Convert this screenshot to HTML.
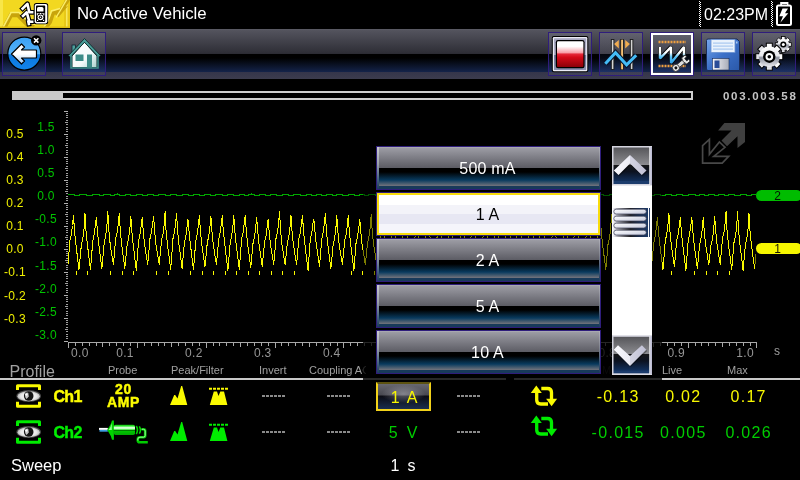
<!DOCTYPE html>
<html>
<head>
<meta charset="utf-8">
<title>Scope</title>
<style>
*{margin:0;padding:0;box-sizing:border-box}
html,body{width:800px;height:480px;background:#000;overflow:hidden}
body{font-family:"Liberation Sans",sans-serif;color:#fff;position:relative}
#root{position:absolute;left:0;top:0;width:800px;height:480px;will-change:transform;overflow:hidden}
.abs{position:absolute}
#ybox{left:0;top:0;width:70px;height:28px;background:#f2d81e;overflow:hidden}
#title{left:77px;top:4px;font-size:16.8px;line-height:20px;white-space:nowrap}
#clock{left:704px;top:5px;font-size:16px;line-height:20px;white-space:nowrap}
#toolbar{left:0;top:29px;width:800px;height:50px;
 background:linear-gradient(to bottom,#5e5e68 0px,#54545e 1px,#2e2e36 24px,#2c2c34 24.5px,#000 25px,#000 29px,#14234a 43px,#34354a 43px,#3c3c4e 50px)}
.tb{position:absolute;top:3px;width:44px;height:44px;border:1px solid #2f1d7c;background:linear-gradient(to bottom,rgba(190,190,215,0.17) 0,rgba(190,190,215,0.15) 21px,rgba(60,100,200,0.07) 21px,rgba(60,100,200,0.22) 39px,rgba(150,150,190,0.1) 39px)}
.tb.sel{border:1px solid #2f1d7c;box-shadow:inset 0 0 0 2px #fff}
.tb svg{position:absolute;left:-1px;top:-1px}
#pbar{left:12px;top:91px;width:681px;height:9px;border:2px solid #cfcfcf;background:#000}
#pfill{left:12px;top:91px;width:51px;height:9px;background:#cacaca}
#ptext{left:723px;top:89px;font-size:11.5px;font-weight:bold;color:#c4c4c4;letter-spacing:1.7px;line-height:14px;white-space:nowrap}
.yl{position:absolute;font-size:12px;line-height:14px;width:40px;text-align:center;white-space:nowrap;letter-spacing:0.3px}
.yl.y{left:-5px;color:#f0f000}
.yl.g{left:26px;color:#00c400}
.xl{position:absolute;top:346px;width:30px;text-align:center;letter-spacing:0.3px;font-size:12px;line-height:14px;color:#969696}
.hd{position:absolute;top:364px;font-size:11px;line-height:13px;color:#a0a0a0;white-space:nowrap}
.val{position:absolute;font-size:16px;line-height:20px;white-space:nowrap;letter-spacing:1.3px}
.col{width:80px;text-align:center;padding-left:1.3px}
.yc{color:#f8f800}.gc{color:#00cc00}
.bd.yc{color:#fcfc00;-webkit-text-stroke:0.45px #fcfc00}.bd.gc{color:#00ee00;-webkit-text-stroke:0.45px #00ee00}
.dash{position:absolute;width:24px;height:2px;background:repeating-linear-gradient(to right,#8a8a8a 0,#8a8a8a 3px,#000 3px,#000 4px)}
.item{position:absolute;left:376px;width:225px;height:44px;border:1px solid #2f1d7c;color:#fff;font-size:16px;letter-spacing:0.2px;text-align:center;line-height:44px;padding-right:2px;
 background:linear-gradient(to bottom,#c8c8d0 0,#9aa0ac 40%,#4a6484 75%,#1c3c5c 100%) left top/2px 100% no-repeat,linear-gradient(to bottom,#b0b0b8 0,#80848e 40%,#3a5474 75%,#1c3c5c 100%) right top/1px 100% no-repeat,linear-gradient(to bottom,#b4b4bc 0,#9c9ca4 1px,#5c5c64 21px,#000 21.5px,#000 25px,#083a5e 33px,#74747c 39px,#183a5a 39.3px,#183a5a 42px)}
.item.sel{border:1px solid #2f1d7c;box-shadow:inset 0 0 0 2px #f8dc0c;color:#000;height:44px;line-height:44px;
 background:linear-gradient(to bottom,#fff 0,#fff 11.5px,#f3f3f9 11.5px,#f3f3f9 21px,#e7e7f3 21px,#e7e7f3 31px,#f5f5fb 31px,#f5f5fb 42px)}
</style>
</head>
<body>
<div id="root">
<!-- title bar -->
<div id="ybox" class="abs">
<svg width="70" height="28" viewBox="0 0 70 28">
 <rect width="70" height="28" fill="#f2d820"/>
 <rect x="0" y="0" width="3" height="28" fill="#f8e648"/>
 <rect x="64" y="0" width="6" height="28" fill="#e8c818"/><rect x="66" y="0" width="1.500" height="28" fill="#f8e860"/>
 <g fill="none" stroke-linejoin="miter">
 <polyline points="3,30 11,15 18,15 27,24 34,27" stroke="#c8a40c" stroke-width="4.500"/>
 <polyline points="3,27.500 11,12.500 19,12.500 28,21.500 35,24.500" stroke="#fbee6a" stroke-width="1.600"/>
 <polyline points="44,30 50,22 53,13 62,10 57,16 62,9 69,-2" stroke="#c8a40c" stroke-width="4"/>
 <polyline points="42,30 48,21 51.500,11 60,8.500" stroke="#fbee6a" stroke-width="1.600"/>
 <polyline points="56,17.500 60,11 67,-1" stroke="#fbee6a" stroke-width="1.400"/>
 </g>
 <rect x="0" y="26.500" width="70" height="1.500" fill="#dcbc14"/>
 <!-- zigzag arrows -->
 <g fill="none" stroke-linejoin="round" stroke-linecap="butt">
  <g stroke="#000" stroke-width="4.800" stroke-linecap="square">
   <path d="M22.600 8.600 L27.400 3.800 L29.300 12.300 L32.200 12.300"/>
   <path d="M23 15.900 L26.800 12.300 L29.300 21.700 L32.200 21.700"/>
   <path d="M28.300 21.500 L28.800 24"/>
  </g>
  <g stroke="#fff" stroke-width="2.600" stroke-linecap="square">
   <path d="M22.600 8.600 L27.400 3.800 L29.300 12.300 L32.200 12.300"/>
   <path d="M23 15.900 L26.800 12.300 L29.300 21.700 L32.200 21.700"/>
   <path d="M28.300 21.500 L28.800 24"/>
  </g>
 </g>
 <!-- scanner -->
 <rect x="33.800" y="3" width="14.400" height="21.300" rx="2.500" fill="#000"/>
 <rect x="34.700" y="3.900" width="12.600" height="19.500" rx="1.800" fill="#fff"/>
 <rect x="36" y="5.600" width="9.200" height="16.300" rx="0.800" fill="#000"/>
 <path d="M37 11.500 L37 8.500 Q37 7 38.500 7 L42 7 Q43.500 7 43.500 8.500 L43.500 11.500 Z" fill="#fff"/>
 <circle cx="40.500" cy="17.300" r="2.900" fill="#fff"/>
 <circle cx="40.500" cy="17.300" r="1.700" fill="#000"/>
 <circle cx="40.500" cy="17.300" r="0.800" fill="#fff"/>
 <rect x="38.400" y="13" width="1" height="1" fill="#fff"/><rect x="40" y="13" width="1" height="1" fill="#fff"/><rect x="41.600" y="13" width="1" height="1" fill="#fff"/>
 <rect x="36.800" y="13" width="1" height="2.500" fill="#fff"/><rect x="43.300" y="13" width="1" height="2.500" fill="#fff"/>
 <rect x="37" y="19.800" width="1.200" height="1.200" fill="#fff"/><rect x="43" y="19.800" width="1.200" height="1.200" fill="#fff"/>
</svg>
</div>
<div id="title" class="abs">No Active Vehicle</div>
<svg class="abs" style="left:696px;top:0" width="104" height="29" viewBox="0 0 104 29">
 <line x1="3.500" y1="1" x2="3.500" y2="27" stroke="#fff" stroke-width="1" stroke-dasharray="1 1"/>
 <line x1="4.500" y1="2" x2="4.500" y2="27" stroke="#fff" stroke-width="1" stroke-dasharray="1 1"/>
 <line x1="75.500" y1="1" x2="75.500" y2="27" stroke="#fff" stroke-width="1" stroke-dasharray="1 1"/>
 <line x1="76.500" y1="2" x2="76.500" y2="27" stroke="#fff" stroke-width="1" stroke-dasharray="1 1"/>
 <!-- battery -->
 <rect x="85.200" y="3" width="6.200" height="3" fill="none" stroke="#fff" stroke-width="2"/>
 <rect x="81" y="5.500" width="14" height="19.500" rx="1.500" fill="#000" stroke="#fff" stroke-width="2"/>
 <path d="M92 8.500 L86.500 8.500 L83.300 16.200 L87 16.200 L84.300 22.800 L92.300 13.300 L89 13.300 Z" fill="#fff"/>
</svg>
<div id="clock" class="abs">02:23PM</div>

<!-- toolbar -->
<div id="toolbar" class="abs">
 <div class="tb" style="left:2px">
  <svg width="44" height="44" viewBox="0 0 44 44">
   <defs><linearGradient id="gb" x1="0" y1="0" x2="0" y2="1"><stop offset="0" stop-color="#3aa0f4"/><stop offset="0.52" stop-color="#58b4f8"/><stop offset="0.53" stop-color="#0a78e0"/><stop offset="1" stop-color="#1484ea"/></linearGradient>
   <linearGradient id="ga" x1="0" y1="0" x2="0" y2="1"><stop offset="0" stop-color="#fff"/><stop offset="0.5" stop-color="#fff"/><stop offset="1" stop-color="#9cc8f4"/></linearGradient></defs>
   <circle cx="22.300" cy="21.600" r="16.500" fill="url(#gb)" stroke="#000" stroke-width="1.200"/>
   <path d="M9.500 22 L19.500 12 L22.500 15 L19.500 18 L34 18 L34.500 18.500 L34.500 25.500 L34 26 L19.500 26 L22.500 29 L19.500 32 Z" fill="url(#ga)" stroke="#000" stroke-width="1.200" stroke-linejoin="round"/>
   <circle cx="34.200" cy="8.400" r="5.200" fill="#000"/>
   <path d="M32 6.200 L36.400 10.600 M36.400 6.200 L32 10.600" stroke="#fff" stroke-width="1.500"/>
  </svg>
 </div>
 <div class="tb" style="left:62px">
  <svg width="44" height="44" viewBox="0 0 44 44">
   <defs><linearGradient id="gh" x1="0" y1="0" x2="1" y2="1"><stop offset="0" stop-color="#fff"/><stop offset="0.6" stop-color="#f4fafa"/><stop offset="1" stop-color="#a8d0cc"/></linearGradient></defs>
   <rect x="10" y="13" width="3.400" height="8" fill="#4ea09c" stroke="#123" stroke-width="0.800"/>
   <path d="M10 24 L22.500 10 L35 24 L35 35.500 L10 35.500 Z" fill="url(#gh)" stroke="#0c2a2a" stroke-width="1"/>
   <path d="M6.500 23.500 L22.500 6.500 L38.500 23.500 L36.500 25.200 L22.500 10.300 L8.500 25.200 Z" fill="#4a9c98" stroke="#0c2a2a" stroke-width="0.900" stroke-linejoin="round"/>
   <path d="M9 22.500 L9 36 L36 36 L36 22.500" fill="none" stroke="#3e8e8a" stroke-width="1.600"/>
   <rect x="13.500" y="22.500" width="8" height="6.500" fill="#3c8c88"/>
   <rect x="25" y="22.500" width="5" height="13" fill="#3c8c88"/>
  </svg>
 </div>
 <div class="tb" style="left:548px">
  <svg width="44" height="44" viewBox="0 0 44 44">
   <defs><linearGradient id="gr" x1="0" y1="0" x2="0" y2="1"><stop offset="0" stop-color="#fff"/><stop offset="0.2" stop-color="#fff"/><stop offset="0.44" stop-color="#f8a0a8"/><stop offset="0.5" stop-color="#e42838"/><stop offset="0.62" stop-color="#d40a18"/><stop offset="1" stop-color="#8a0008"/></linearGradient>
   <linearGradient id="gf" x1="0" y1="0" x2="0" y2="1"><stop offset="0" stop-color="#a4a4bc"/><stop offset="0.52" stop-color="#b4b4cc"/><stop offset="0.54" stop-color="#70749a"/><stop offset="1" stop-color="#8c90b0"/></linearGradient></defs>
   <rect x="3.800" y="4" width="36.500" height="36.200" rx="2" fill="#000"/>
   <rect x="4.800" y="5" width="34.500" height="34.200" rx="1.200" fill="#ececf6"/>
   <rect x="6" y="6.200" width="32.200" height="31.800" rx="0.500" fill="url(#gf)"/>
   <rect x="7.800" y="8" width="28.800" height="28.300" rx="2.200" fill="#000"/>
   <rect x="9" y="9.200" width="26.400" height="25.900" rx="1.200" fill="url(#gr)"/>
  </svg>
 </div>
 <div class="tb" style="left:599px">
  <svg width="44" height="44" viewBox="0 0 44 44">
   <rect x="12.300" y="7.500" width="2.600" height="30" fill="#d4d4d4" stroke="#1a1a1a" stroke-width="0.900"/>
   <rect x="31.300" y="7.500" width="2.600" height="30" fill="#d4d4d4" stroke="#1a1a1a" stroke-width="0.900"/>
   <rect x="21.700" y="7.500" width="2.800" height="30" fill="#e8a040" stroke="#1a1a1a" stroke-width="0.900"/>
   <rect x="22.600" y="7.500" width="1" height="30" fill="#f8d8a0"/>
   <path d="M15.100 12 L19.800 8 L19.800 16.500 Z" fill="#f0ac50"/>
   <path d="M30.900 12 L26.200 8 L26.200 16.500 Z" fill="#f0ac50"/>
   <polyline points="6.300,31.800 16.500,20.800 27.600,32.800 37.200,23.200" fill="none" stroke="#08142a" stroke-width="5" stroke-linejoin="miter"/>
   <polyline points="6.300,31.800 16.500,20.800 27.600,32.800 37.200,23.200" fill="none" stroke="#44bcf6" stroke-width="3" stroke-linejoin="miter"/>
  </svg>
 </div>
 <div class="tb sel" style="left:650px">
  <svg width="44" height="44" viewBox="0 0 44 44">
   <defs><linearGradient id="gs" x1="0" y1="0" x2="0" y2="1"><stop offset="0" stop-color="#fff"/><stop offset="0.35" stop-color="#fff"/><stop offset="0.62" stop-color="#58c0f4"/><stop offset="1" stop-color="#2aa0e8"/></linearGradient></defs>
   <line x1="8.500" y1="10" x2="36" y2="10" stroke="#f0a040" stroke-width="2.400" stroke-dasharray="2 1"/>
   <line x1="8.500" y1="34" x2="36" y2="34" stroke="#f0a040" stroke-width="2.400" stroke-dasharray="2 1"/>
   <polyline points="10,15 10,26.500 21,15 21,31 34,15 34,23.500" fill="none" stroke="#000" stroke-width="4" stroke-linejoin="bevel"/>
   <polyline points="10,15 10,26.500 21,15 21,31 34,15 34,23.500" fill="none" stroke="url(#gs)" stroke-width="2.500" stroke-linejoin="bevel"/>
   <g transform="translate(31.500 31.200) rotate(-40)">
    <rect x="-7" y="-1.900" width="12" height="3.800" fill="#dcdcdc" stroke="#2a2a2a" stroke-width="0.800"/>
    <circle cx="-7.300" cy="0" r="3.500" fill="#e8e8e8" stroke="#2a2a2a" stroke-width="0.800"/>
    <circle cx="-7.300" cy="0" r="1.500" fill="#111"/>
    <path d="M3.500 -4 L8 -4 L8 -1.600 L5.500 -1.600 L5.500 1.600 L8 1.600 L8 4 L3.500 4 Q1 0 3.500 -4 Z" fill="#e8e8e8" stroke="#2a2a2a" stroke-width="0.800"/>
   </g>
  </svg>
 </div>
 <div class="tb" style="left:701px">
  <svg width="44" height="44" viewBox="0 0 44 44">
   <defs><linearGradient id="gd" x1="0" y1="0" x2="1" y2="1"><stop offset="0" stop-color="#78a8ec"/><stop offset="0.5" stop-color="#3c70c8"/><stop offset="1" stop-color="#2a58a8"/></linearGradient>
   <linearGradient id="gm" x1="0" y1="0" x2="1" y2="0"><stop offset="0" stop-color="#f4f4f8"/><stop offset="1" stop-color="#a8acb8"/></linearGradient></defs>
   <path d="M7 7 L36 7 L38.500 9.500 L38.500 38.500 L7 38.500 Q5.500 38.500 5.500 37 L5.500 8.500 Q5.500 7 7 7 Z" fill="url(#gd)" stroke="#1a2c58" stroke-width="1"/>
   <rect x="10" y="7.500" width="24" height="13" fill="#eaf2fc" stroke="#6890d0" stroke-width="0.800"/>
   <rect x="12" y="10.500" width="20" height="1.200" fill="#a8c8f0"/><rect x="12" y="13.500" width="20" height="1.200" fill="#a8c8f0"/><rect x="12" y="16.500" width="20" height="1.200" fill="#a8c8f0"/>
   <rect x="11.500" y="26.500" width="16.500" height="11.500" fill="url(#gm)" stroke="#1a2c58" stroke-width="0.600"/>
   <rect x="13.500" y="28.500" width="5" height="7.500" fill="#2a4c98"/>
   <rect x="35" y="9.500" width="1.500" height="2" fill="#a8c8f0"/>
  </svg>
 </div>
 <div class="tb" style="left:752px">
  <svg width="44" height="44" viewBox="0 0 44 44">
   <defs><linearGradient id="gg" x1="0" y1="0" x2="0" y2="1"><stop offset="0" stop-color="#fff"/><stop offset="0.45" stop-color="#e8e8ec"/><stop offset="0.55" stop-color="#8c909c"/><stop offset="1" stop-color="#f0f0f4"/></linearGradient></defs>
   <g transform="translate(31.300 12.500)">
    <g fill="url(#gg)" stroke="#000" stroke-width="0.800">
     <rect x="-1.800" y="-8" width="3.600" height="16" /><rect x="-1.800" y="-8" width="3.600" height="16" transform="rotate(45)"/><rect x="-1.800" y="-8" width="3.600" height="16" transform="rotate(90)"/><rect x="-1.800" y="-8" width="3.600" height="16" transform="rotate(135)"/>
    </g>
    <circle r="5.800" fill="url(#gg)"/><circle r="3" fill="#000"/><circle r="1.500" fill="#fff"/>
   </g>
   <g transform="translate(17.300 24.700)">
    <g fill="url(#gg)" stroke="#000" stroke-width="1">
     <rect x="-3" y="-13.500" width="6" height="27"/><rect x="-3" y="-13.500" width="6" height="27" transform="rotate(45)"/><rect x="-3" y="-13.500" width="6" height="27" transform="rotate(90)"/><rect x="-3" y="-13.500" width="6" height="27" transform="rotate(135)"/>
    </g>
    <circle r="10.500" fill="url(#gg)"/><circle r="6.200" fill="#000"/><circle r="3.800" fill="#fff"/><circle r="1.800" fill="#000"/>
   </g>
  </svg>
 </div>
</div>

<!-- progress -->
<div id="pbar" class="abs"></div><div id="pfill" class="abs"></div>
<div id="ptext" class="abs">003.003.58</div>

<!-- graph -->
<svg class="abs" style="left:0;top:0" width="800" height="480" viewBox="0 0 800 480" shape-rendering="crispEdges">
 <rect x="64" y="111" width="4" height="1" fill="#b0b0b0"/><rect x="66" y="113" width="2" height="1" fill="#a0a0a0"/><rect x="66" y="115" width="2" height="1" fill="#a0a0a0"/><rect x="66" y="117" width="2" height="1" fill="#a0a0a0"/><rect x="66" y="120" width="2" height="1" fill="#a0a0a0"/><rect x="65" y="122" width="3" height="1" fill="#a0a0a0"/><rect x="66" y="124" width="2" height="1" fill="#a0a0a0"/><rect x="66" y="127" width="2" height="1" fill="#a0a0a0"/><rect x="66" y="129" width="2" height="1" fill="#a0a0a0"/><rect x="66" y="131" width="2" height="1" fill="#a0a0a0"/><rect x="64" y="134" width="4" height="1" fill="#b0b0b0"/><rect x="66" y="136" width="2" height="1" fill="#a0a0a0"/><rect x="66" y="138" width="2" height="1" fill="#a0a0a0"/><rect x="66" y="140" width="2" height="1" fill="#a0a0a0"/><rect x="66" y="143" width="2" height="1" fill="#a0a0a0"/><rect x="65" y="145" width="3" height="1" fill="#a0a0a0"/><rect x="66" y="147" width="2" height="1" fill="#a0a0a0"/><rect x="66" y="150" width="2" height="1" fill="#a0a0a0"/><rect x="66" y="152" width="2" height="1" fill="#a0a0a0"/><rect x="66" y="154" width="2" height="1" fill="#a0a0a0"/><rect x="64" y="157" width="4" height="1" fill="#b0b0b0"/><rect x="66" y="159" width="2" height="1" fill="#a0a0a0"/><rect x="66" y="161" width="2" height="1" fill="#a0a0a0"/><rect x="66" y="163" width="2" height="1" fill="#a0a0a0"/><rect x="66" y="166" width="2" height="1" fill="#a0a0a0"/><rect x="65" y="168" width="3" height="1" fill="#a0a0a0"/><rect x="66" y="170" width="2" height="1" fill="#a0a0a0"/><rect x="66" y="173" width="2" height="1" fill="#a0a0a0"/><rect x="66" y="175" width="2" height="1" fill="#a0a0a0"/><rect x="66" y="177" width="2" height="1" fill="#a0a0a0"/><rect x="64" y="180" width="4" height="1" fill="#b0b0b0"/><rect x="66" y="182" width="2" height="1" fill="#a0a0a0"/><rect x="66" y="184" width="2" height="1" fill="#a0a0a0"/><rect x="66" y="186" width="2" height="1" fill="#a0a0a0"/><rect x="66" y="189" width="2" height="1" fill="#a0a0a0"/><rect x="65" y="191" width="3" height="1" fill="#a0a0a0"/><rect x="66" y="193" width="2" height="1" fill="#a0a0a0"/><rect x="66" y="196" width="2" height="1" fill="#a0a0a0"/><rect x="66" y="198" width="2" height="1" fill="#a0a0a0"/><rect x="66" y="200" width="2" height="1" fill="#a0a0a0"/><rect x="64" y="203" width="4" height="1" fill="#b0b0b0"/><rect x="66" y="205" width="2" height="1" fill="#a0a0a0"/><rect x="66" y="207" width="2" height="1" fill="#a0a0a0"/><rect x="66" y="209" width="2" height="1" fill="#a0a0a0"/><rect x="66" y="212" width="2" height="1" fill="#a0a0a0"/><rect x="65" y="214" width="3" height="1" fill="#a0a0a0"/><rect x="66" y="216" width="2" height="1" fill="#a0a0a0"/><rect x="66" y="219" width="2" height="1" fill="#a0a0a0"/><rect x="66" y="221" width="2" height="1" fill="#a0a0a0"/><rect x="66" y="223" width="2" height="1" fill="#a0a0a0"/><rect x="64" y="226" width="4" height="1" fill="#b0b0b0"/><rect x="66" y="228" width="2" height="1" fill="#a0a0a0"/><rect x="66" y="230" width="2" height="1" fill="#a0a0a0"/><rect x="66" y="232" width="2" height="1" fill="#a0a0a0"/><rect x="66" y="235" width="2" height="1" fill="#a0a0a0"/><rect x="65" y="237" width="3" height="1" fill="#a0a0a0"/><rect x="66" y="239" width="2" height="1" fill="#a0a0a0"/><rect x="66" y="242" width="2" height="1" fill="#a0a0a0"/><rect x="66" y="244" width="2" height="1" fill="#a0a0a0"/><rect x="66" y="246" width="2" height="1" fill="#a0a0a0"/><rect x="64" y="249" width="4" height="1" fill="#b0b0b0"/><rect x="66" y="251" width="2" height="1" fill="#a0a0a0"/><rect x="66" y="253" width="2" height="1" fill="#a0a0a0"/><rect x="66" y="255" width="2" height="1" fill="#a0a0a0"/><rect x="66" y="258" width="2" height="1" fill="#a0a0a0"/><rect x="65" y="260" width="3" height="1" fill="#a0a0a0"/><rect x="66" y="262" width="2" height="1" fill="#a0a0a0"/><rect x="66" y="265" width="2" height="1" fill="#a0a0a0"/><rect x="66" y="267" width="2" height="1" fill="#a0a0a0"/><rect x="66" y="269" width="2" height="1" fill="#a0a0a0"/><rect x="64" y="272" width="4" height="1" fill="#b0b0b0"/><rect x="66" y="274" width="2" height="1" fill="#a0a0a0"/><rect x="66" y="276" width="2" height="1" fill="#a0a0a0"/><rect x="66" y="278" width="2" height="1" fill="#a0a0a0"/><rect x="66" y="281" width="2" height="1" fill="#a0a0a0"/><rect x="65" y="283" width="3" height="1" fill="#a0a0a0"/><rect x="66" y="285" width="2" height="1" fill="#a0a0a0"/><rect x="66" y="288" width="2" height="1" fill="#a0a0a0"/><rect x="66" y="290" width="2" height="1" fill="#a0a0a0"/><rect x="66" y="292" width="2" height="1" fill="#a0a0a0"/><rect x="64" y="295" width="4" height="1" fill="#b0b0b0"/><rect x="66" y="297" width="2" height="1" fill="#a0a0a0"/><rect x="66" y="299" width="2" height="1" fill="#a0a0a0"/><rect x="66" y="301" width="2" height="1" fill="#a0a0a0"/><rect x="66" y="304" width="2" height="1" fill="#a0a0a0"/><rect x="65" y="306" width="3" height="1" fill="#a0a0a0"/><rect x="66" y="308" width="2" height="1" fill="#a0a0a0"/><rect x="66" y="311" width="2" height="1" fill="#a0a0a0"/><rect x="66" y="313" width="2" height="1" fill="#a0a0a0"/><rect x="66" y="315" width="2" height="1" fill="#a0a0a0"/><rect x="64" y="318" width="4" height="1" fill="#b0b0b0"/><rect x="66" y="320" width="2" height="1" fill="#a0a0a0"/><rect x="66" y="322" width="2" height="1" fill="#a0a0a0"/><rect x="66" y="324" width="2" height="1" fill="#a0a0a0"/><rect x="66" y="327" width="2" height="1" fill="#a0a0a0"/><rect x="65" y="329" width="3" height="1" fill="#a0a0a0"/><rect x="66" y="331" width="2" height="1" fill="#a0a0a0"/><rect x="66" y="334" width="2" height="1" fill="#a0a0a0"/><rect x="66" y="336" width="2" height="1" fill="#a0a0a0"/><rect x="66" y="338" width="2" height="1" fill="#a0a0a0"/><rect x="64" y="341" width="4" height="1" fill="#b0b0b0"/>
 <rect x="68" y="342" width="689" height="1" fill="#a8a8a8"/><rect x="68" y="343" width="1" height="5" fill="#a8a8a8"/><rect x="75" y="343" width="1" height="3" fill="#a8a8a8"/><rect x="82" y="343" width="1" height="3" fill="#a8a8a8"/><rect x="89" y="343" width="1" height="3" fill="#a8a8a8"/><rect x="96" y="343" width="1" height="3" fill="#a8a8a8"/><rect x="102" y="343" width="1" height="4" fill="#a8a8a8"/><rect x="109" y="343" width="1" height="3" fill="#a8a8a8"/><rect x="116" y="343" width="1" height="3" fill="#a8a8a8"/><rect x="123" y="343" width="1" height="3" fill="#a8a8a8"/><rect x="130" y="343" width="1" height="3" fill="#a8a8a8"/><rect x="137" y="343" width="1" height="5" fill="#a8a8a8"/><rect x="144" y="343" width="1" height="3" fill="#a8a8a8"/><rect x="151" y="343" width="1" height="3" fill="#a8a8a8"/><rect x="158" y="343" width="1" height="3" fill="#a8a8a8"/><rect x="164" y="343" width="1" height="3" fill="#a8a8a8"/><rect x="171" y="343" width="1" height="4" fill="#a8a8a8"/><rect x="178" y="343" width="1" height="3" fill="#a8a8a8"/><rect x="185" y="343" width="1" height="3" fill="#a8a8a8"/><rect x="192" y="343" width="1" height="3" fill="#a8a8a8"/><rect x="199" y="343" width="1" height="3" fill="#a8a8a8"/><rect x="206" y="343" width="1" height="5" fill="#a8a8a8"/><rect x="213" y="343" width="1" height="3" fill="#a8a8a8"/><rect x="219" y="343" width="1" height="3" fill="#a8a8a8"/><rect x="226" y="343" width="1" height="3" fill="#a8a8a8"/><rect x="233" y="343" width="1" height="3" fill="#a8a8a8"/><rect x="240" y="343" width="1" height="4" fill="#a8a8a8"/><rect x="247" y="343" width="1" height="3" fill="#a8a8a8"/><rect x="254" y="343" width="1" height="3" fill="#a8a8a8"/><rect x="261" y="343" width="1" height="3" fill="#a8a8a8"/><rect x="268" y="343" width="1" height="3" fill="#a8a8a8"/><rect x="275" y="343" width="1" height="5" fill="#a8a8a8"/><rect x="281" y="343" width="1" height="3" fill="#a8a8a8"/><rect x="288" y="343" width="1" height="3" fill="#a8a8a8"/><rect x="295" y="343" width="1" height="3" fill="#a8a8a8"/><rect x="302" y="343" width="1" height="3" fill="#a8a8a8"/><rect x="309" y="343" width="1" height="4" fill="#a8a8a8"/><rect x="316" y="343" width="1" height="3" fill="#a8a8a8"/><rect x="323" y="343" width="1" height="3" fill="#a8a8a8"/><rect x="330" y="343" width="1" height="3" fill="#a8a8a8"/><rect x="337" y="343" width="1" height="3" fill="#a8a8a8"/><rect x="343" y="343" width="1" height="5" fill="#a8a8a8"/><rect x="350" y="343" width="1" height="3" fill="#a8a8a8"/><rect x="357" y="343" width="1" height="3" fill="#a8a8a8"/><rect x="364" y="343" width="1" height="3" fill="#a8a8a8"/><rect x="371" y="343" width="1" height="3" fill="#a8a8a8"/><rect x="378" y="343" width="1" height="4" fill="#a8a8a8"/><rect x="385" y="343" width="1" height="3" fill="#a8a8a8"/><rect x="392" y="343" width="1" height="3" fill="#a8a8a8"/><rect x="398" y="343" width="1" height="3" fill="#a8a8a8"/><rect x="405" y="343" width="1" height="3" fill="#a8a8a8"/><rect x="412" y="343" width="1" height="5" fill="#a8a8a8"/><rect x="419" y="343" width="1" height="3" fill="#a8a8a8"/><rect x="426" y="343" width="1" height="3" fill="#a8a8a8"/><rect x="433" y="343" width="1" height="3" fill="#a8a8a8"/><rect x="440" y="343" width="1" height="3" fill="#a8a8a8"/><rect x="447" y="343" width="1" height="4" fill="#a8a8a8"/><rect x="454" y="343" width="1" height="3" fill="#a8a8a8"/><rect x="460" y="343" width="1" height="3" fill="#a8a8a8"/><rect x="467" y="343" width="1" height="3" fill="#a8a8a8"/><rect x="474" y="343" width="1" height="3" fill="#a8a8a8"/><rect x="481" y="343" width="1" height="5" fill="#a8a8a8"/><rect x="488" y="343" width="1" height="3" fill="#a8a8a8"/><rect x="495" y="343" width="1" height="3" fill="#a8a8a8"/><rect x="502" y="343" width="1" height="3" fill="#a8a8a8"/><rect x="509" y="343" width="1" height="3" fill="#a8a8a8"/><rect x="516" y="343" width="1" height="4" fill="#a8a8a8"/><rect x="522" y="343" width="1" height="3" fill="#a8a8a8"/><rect x="529" y="343" width="1" height="3" fill="#a8a8a8"/><rect x="536" y="343" width="1" height="3" fill="#a8a8a8"/><rect x="543" y="343" width="1" height="3" fill="#a8a8a8"/><rect x="550" y="343" width="1" height="5" fill="#a8a8a8"/><rect x="557" y="343" width="1" height="3" fill="#a8a8a8"/><rect x="564" y="343" width="1" height="3" fill="#a8a8a8"/><rect x="571" y="343" width="1" height="3" fill="#a8a8a8"/><rect x="577" y="343" width="1" height="3" fill="#a8a8a8"/><rect x="584" y="343" width="1" height="4" fill="#a8a8a8"/><rect x="591" y="343" width="1" height="3" fill="#a8a8a8"/><rect x="598" y="343" width="1" height="3" fill="#a8a8a8"/><rect x="605" y="343" width="1" height="3" fill="#a8a8a8"/><rect x="612" y="343" width="1" height="3" fill="#a8a8a8"/><rect x="619" y="343" width="1" height="5" fill="#a8a8a8"/><rect x="626" y="343" width="1" height="3" fill="#a8a8a8"/><rect x="633" y="343" width="1" height="3" fill="#a8a8a8"/><rect x="639" y="343" width="1" height="3" fill="#a8a8a8"/><rect x="646" y="343" width="1" height="3" fill="#a8a8a8"/><rect x="653" y="343" width="1" height="4" fill="#a8a8a8"/><rect x="660" y="343" width="1" height="3" fill="#a8a8a8"/><rect x="667" y="343" width="1" height="3" fill="#a8a8a8"/><rect x="674" y="343" width="1" height="3" fill="#a8a8a8"/><rect x="681" y="343" width="1" height="3" fill="#a8a8a8"/><rect x="688" y="343" width="1" height="5" fill="#a8a8a8"/><rect x="695" y="343" width="1" height="3" fill="#a8a8a8"/><rect x="701" y="343" width="1" height="3" fill="#a8a8a8"/><rect x="708" y="343" width="1" height="3" fill="#a8a8a8"/><rect x="715" y="343" width="1" height="3" fill="#a8a8a8"/><rect x="722" y="343" width="1" height="4" fill="#a8a8a8"/><rect x="729" y="343" width="1" height="3" fill="#a8a8a8"/><rect x="736" y="343" width="1" height="3" fill="#a8a8a8"/><rect x="743" y="343" width="1" height="3" fill="#a8a8a8"/><rect x="750" y="343" width="1" height="3" fill="#a8a8a8"/><rect x="756" y="343" width="1" height="5" fill="#a8a8a8"/>
 <rect x="68" y="194" width="7" height="1" fill="#00a800"/><rect x="74" y="195" width="6" height="1" fill="#00a800"/><rect x="79" y="194" width="8" height="1" fill="#00a800"/><rect x="86" y="195" width="7" height="1" fill="#00a800"/><rect x="92" y="194" width="8" height="1" fill="#00a800"/><rect x="99" y="195" width="5" height="1" fill="#00a800"/><rect x="103" y="194" width="8" height="1" fill="#00a800"/><rect x="110" y="195" width="5" height="1" fill="#00a800"/><rect x="114" y="194" width="6" height="1" fill="#00a800"/><rect x="117" y="193" width="1" height="1" fill="#00a800"/><rect x="119" y="195" width="7" height="1" fill="#00a800"/><rect x="125" y="194" width="6" height="1" fill="#00a800"/><rect x="130" y="195" width="7" height="1" fill="#00a800"/><rect x="136" y="194" width="7" height="1" fill="#00a800"/><rect x="142" y="195" width="6" height="1" fill="#00a800"/><rect x="147" y="194" width="7" height="1" fill="#00a800"/><rect x="153" y="195" width="6" height="1" fill="#00a800"/><rect x="158" y="194" width="8" height="1" fill="#00a800"/><rect x="165" y="195" width="6" height="1" fill="#00a800"/><rect x="170" y="194" width="7" height="1" fill="#00a800"/><rect x="176" y="195" width="7" height="1" fill="#00a800"/><rect x="182" y="194" width="7" height="1" fill="#00a800"/><rect x="188" y="195" width="6" height="1" fill="#00a800"/><rect x="193" y="194" width="7" height="1" fill="#00a800"/><rect x="199" y="195" width="6" height="1" fill="#00a800"/><rect x="204" y="194" width="7" height="1" fill="#00a800"/><rect x="210" y="195" width="6" height="1" fill="#00a800"/><rect x="215" y="194" width="8" height="1" fill="#00a800"/><rect x="222" y="195" width="6" height="1" fill="#00a800"/><rect x="227" y="194" width="7" height="1" fill="#00a800"/><rect x="233" y="195" width="7" height="1" fill="#00a800"/><rect x="239" y="194" width="6" height="1" fill="#00a800"/><rect x="244" y="195" width="5" height="1" fill="#00a800"/><rect x="248" y="194" width="7" height="1" fill="#00a800"/><rect x="251" y="193" width="1" height="1" fill="#00a800"/><rect x="254" y="195" width="6" height="1" fill="#00a800"/><rect x="259" y="194" width="7" height="1" fill="#00a800"/><rect x="265" y="195" width="6" height="1" fill="#00a800"/><rect x="270" y="194" width="7" height="1" fill="#00a800"/><rect x="276" y="195" width="7" height="1" fill="#00a800"/><rect x="282" y="194" width="7" height="1" fill="#00a800"/><rect x="288" y="195" width="6" height="1" fill="#00a800"/><rect x="293" y="194" width="8" height="1" fill="#00a800"/><rect x="300" y="195" width="7" height="1" fill="#00a800"/><rect x="306" y="194" width="6" height="1" fill="#00a800"/><rect x="311" y="195" width="6" height="1" fill="#00a800"/><rect x="316" y="194" width="6" height="1" fill="#00a800"/><rect x="321" y="195" width="6" height="1" fill="#00a800"/><rect x="326" y="194" width="7" height="1" fill="#00a800"/><rect x="332" y="195" width="5" height="1" fill="#00a800"/><rect x="336" y="194" width="7" height="1" fill="#00a800"/><rect x="342" y="195" width="7" height="1" fill="#00a800"/><rect x="348" y="194" width="7" height="1" fill="#00a800"/><rect x="354" y="195" width="6" height="1" fill="#00a800"/><rect x="359" y="194" width="6" height="1" fill="#00a800"/><rect x="364" y="195" width="5" height="1" fill="#00a800"/><rect x="368" y="194" width="8" height="1" fill="#00a800"/><rect x="375" y="195" width="6" height="1" fill="#00a800"/><rect x="380" y="194" width="7" height="1" fill="#00a800"/><rect x="386" y="195" width="6" height="1" fill="#00a800"/><rect x="391" y="194" width="7" height="1" fill="#00a800"/><rect x="397" y="195" width="6" height="1" fill="#00a800"/><rect x="402" y="194" width="7" height="1" fill="#00a800"/><rect x="408" y="195" width="5" height="1" fill="#00a800"/><rect x="412" y="194" width="7" height="1" fill="#00a800"/><rect x="418" y="195" width="6" height="1" fill="#00a800"/><rect x="423" y="194" width="8" height="1" fill="#00a800"/><rect x="430" y="195" width="6" height="1" fill="#00a800"/><rect x="435" y="194" width="7" height="1" fill="#00a800"/><rect x="441" y="195" width="5" height="1" fill="#00a800"/><rect x="445" y="194" width="7" height="1" fill="#00a800"/><rect x="451" y="195" width="6" height="1" fill="#00a800"/><rect x="456" y="194" width="7" height="1" fill="#00a800"/><rect x="462" y="195" width="5" height="1" fill="#00a800"/><rect x="466" y="194" width="8" height="1" fill="#00a800"/><rect x="473" y="195" width="6" height="1" fill="#00a800"/><rect x="478" y="194" width="7" height="1" fill="#00a800"/><rect x="484" y="195" width="5" height="1" fill="#00a800"/><rect x="488" y="194" width="6" height="1" fill="#00a800"/><rect x="493" y="195" width="6" height="1" fill="#00a800"/><rect x="498" y="194" width="7" height="1" fill="#00a800"/><rect x="504" y="195" width="5" height="1" fill="#00a800"/><rect x="508" y="194" width="8" height="1" fill="#00a800"/><rect x="515" y="195" width="6" height="1" fill="#00a800"/><rect x="520" y="194" width="6" height="1" fill="#00a800"/><rect x="525" y="195" width="6" height="1" fill="#00a800"/><rect x="530" y="194" width="6" height="1" fill="#00a800"/><rect x="535" y="195" width="7" height="1" fill="#00a800"/><rect x="541" y="194" width="7" height="1" fill="#00a800"/><rect x="547" y="195" width="6" height="1" fill="#00a800"/><rect x="552" y="194" width="6" height="1" fill="#00a800"/><rect x="557" y="195" width="6" height="1" fill="#00a800"/><rect x="562" y="194" width="6" height="1" fill="#00a800"/><rect x="567" y="195" width="7" height="1" fill="#00a800"/><rect x="573" y="194" width="7" height="1" fill="#00a800"/><rect x="579" y="195" width="6" height="1" fill="#00a800"/><rect x="584" y="194" width="7" height="1" fill="#00a800"/><rect x="590" y="195" width="7" height="1" fill="#00a800"/><rect x="596" y="194" width="8" height="1" fill="#00a800"/><rect x="603" y="195" width="7" height="1" fill="#00a800"/><rect x="609" y="194" width="7" height="1" fill="#00a800"/><rect x="615" y="195" width="5" height="1" fill="#00a800"/><rect x="619" y="194" width="7" height="1" fill="#00a800"/><rect x="625" y="195" width="6" height="1" fill="#00a800"/><rect x="630" y="194" width="8" height="1" fill="#00a800"/><rect x="637" y="195" width="6" height="1" fill="#00a800"/><rect x="642" y="194" width="8" height="1" fill="#00a800"/><rect x="649" y="195" width="6" height="1" fill="#00a800"/><rect x="654" y="194" width="7" height="1" fill="#00a800"/><rect x="660" y="195" width="6" height="1" fill="#00a800"/><rect x="665" y="194" width="7" height="1" fill="#00a800"/><rect x="671" y="195" width="6" height="1" fill="#00a800"/><rect x="676" y="194" width="7" height="1" fill="#00a800"/><rect x="682" y="195" width="7" height="1" fill="#00a800"/><rect x="688" y="194" width="8" height="1" fill="#00a800"/><rect x="695" y="195" width="5" height="1" fill="#00a800"/><rect x="699" y="194" width="6" height="1" fill="#00a800"/><rect x="704" y="195" width="5" height="1" fill="#00a800"/><rect x="708" y="194" width="7" height="1" fill="#00a800"/><rect x="714" y="195" width="5" height="1" fill="#00a800"/><rect x="718" y="194" width="7" height="1" fill="#00a800"/><rect x="724" y="195" width="5" height="1" fill="#00a800"/><rect x="728" y="194" width="7" height="1" fill="#00a800"/><rect x="734" y="195" width="7" height="1" fill="#00a800"/><rect x="740" y="194" width="7" height="1" fill="#00a800"/><rect x="746" y="195" width="6" height="1" fill="#00a800"/><rect x="751" y="194" width="5" height="1" fill="#00a800"/>
 <defs><clipPath id="cw"><rect x="68" y="200" width="687.500" height="90"/></clipPath></defs>
 <polyline points="56.1,269.5 58.4,244.5 59.8,238.5 61.0,229.5 62.0,215.5 62.9,229.5 64.5,244.5 67.6,269.5 69.9,240.5 71.3,234.5 72.5,225.5 73.5,215.5 74.4,229.5 75.9,244.5 79.0,269.5 81.4,244.5 82.8,238.5 84.0,229.5 85.0,213.5 85.9,229.5 87.4,244.5 90.5,269.5 92.8,240.5 94.2,234.5 95.4,225.5 96.4,217.5 97.3,229.5 98.8,244.5 101.9,268.5 104.2,242.5 105.6,236.5 106.8,227.5 107.8,211.5 108.8,229.5 110.2,244.5 113.4,264.5 115.7,238.5 117.1,232.5 118.3,223.5 119.3,213.5 120.2,229.5 121.7,244.5 124.8,268.5 127.2,244.5 128.6,238.5 129.8,229.5 130.8,216.5 131.7,229.5 133.2,244.5 136.3,270.5 138.6,240.5 140.0,234.5 141.2,225.5 142.2,217.5 143.1,229.5 144.6,244.5 147.7,264.5 150.0,238.5 151.4,232.5 152.6,223.5 153.6,216.5 154.5,229.5 156.0,244.5 159.2,264.5 161.5,240.5 162.9,234.5 164.1,225.5 165.1,211.5 166.0,229.5 167.5,244.5 170.7,269.5 173.0,238.5 174.4,232.5 175.6,223.5 176.6,213.5 177.5,229.5 179.0,244.5 182.1,268.5 184.4,242.5 185.8,236.5 187.0,227.5 188.0,219.5 188.9,229.5 190.4,244.5 193.5,269.5 195.8,240.5 197.2,234.5 198.4,225.5 199.4,215.5 200.3,229.5 201.8,244.5 205.0,266.5 207.3,242.5 208.7,236.5 209.9,227.5 210.9,216.5 211.8,229.5 213.3,244.5 216.4,264.5 218.8,238.5 220.2,232.5 221.3,223.5 222.3,215.5 223.2,229.5 224.8,244.5 227.9,270.5 230.2,242.5 231.6,236.5 232.8,227.5 233.8,215.5 234.7,229.5 236.2,244.5 239.3,269.5 241.7,238.5 243.1,232.5 244.2,223.5 245.2,215.5 246.2,229.5 247.7,244.5 250.8,267.5 253.1,242.5 254.5,236.5 255.7,227.5 256.7,217.5 257.6,229.5 259.1,244.5 262.2,266.5 264.5,242.5 265.9,236.5 267.1,227.5 268.1,219.5 269.0,229.5 270.5,244.5 273.7,264.5 276.0,238.5 277.4,232.5 278.6,223.5 279.6,211.5 280.5,229.5 282.0,244.5 285.1,264.5 287.4,242.5 288.8,236.5 290.0,227.5 291.0,215.5 291.9,229.5 293.4,244.5 296.6,264.5 298.9,238.5 300.3,232.5 301.5,223.5 302.5,215.5 303.4,229.5 304.9,244.5 308.1,270.5 310.3,238.5 311.8,232.5 312.9,223.5 313.9,219.5 314.8,229.5 316.3,244.5 319.5,266.5 321.8,238.5 323.2,232.5 324.4,223.5 325.4,213.5 326.3,229.5 327.8,244.5 330.9,268.5 333.2,244.5 334.6,238.5 335.8,229.5 336.8,215.5 337.7,229.5 339.2,244.5 342.4,264.5 344.7,240.5 346.1,234.5 347.3,225.5 348.3,215.5 349.2,229.5 350.7,244.5 353.9,270.5 356.1,242.5 357.6,236.5 358.8,227.5 359.8,219.5 360.6,229.5 362.1,244.5 365.3,264.5 367.6,242.5 369.0,236.5 370.2,227.5 371.2,214.5 372.1,229.5 373.6,244.5 376.8,264.5 379.0,244.5 380.4,238.5 381.6,229.5 382.6,214.5 383.5,229.5 385.0,244.5 388.2,264.5 390.5,240.5 391.9,234.5 393.1,225.5 394.1,219.5 395.0,229.5 396.5,244.5 399.6,270.5 401.9,238.5 403.3,232.5 404.5,223.5 405.5,213.5 406.4,229.5 407.9,244.5 411.1,264.5 413.4,244.5 414.8,238.5 416.0,229.5 417.0,211.5 417.9,229.5 419.4,244.5 422.6,268.5 424.8,240.5 426.2,234.5 427.4,225.5 428.4,219.5 429.3,229.5 430.8,244.5 434.0,269.5 436.3,240.5 437.7,234.5 438.9,225.5 439.9,217.5 440.8,229.5 442.3,244.5 445.4,269.5 447.7,240.5 449.1,234.5 450.3,225.5 451.3,215.5 452.2,229.5 453.7,244.5 456.9,266.5 459.2,244.5 460.6,238.5 461.8,229.5 462.8,217.5 463.7,229.5 465.2,244.5 468.4,268.5 470.6,238.5 472.1,232.5 473.2,223.5 474.2,217.5 475.1,229.5 476.6,244.5 479.8,268.5 482.1,240.5 483.5,234.5 484.7,225.5 485.7,215.5 486.6,229.5 488.1,244.5 491.2,267.5 493.5,242.5 494.9,236.5 496.1,227.5 497.1,211.5 498.0,229.5 499.5,244.5 502.7,266.5 505.0,240.5 506.4,234.5 507.6,225.5 508.6,211.5 509.5,229.5 511.0,244.5 514.1,269.5 516.4,238.5 517.8,232.5 519.0,223.5 520.0,215.5 520.9,229.5 522.4,244.5 525.6,266.5 527.9,240.5 529.3,234.5 530.5,225.5 531.5,211.5 532.4,229.5 533.9,244.5 537.1,267.5 539.4,238.5 540.8,232.5 542.0,223.5 543.0,215.5 543.9,229.5 545.4,244.5 548.5,269.5 550.8,242.5 552.2,236.5 553.4,227.5 554.4,219.5 555.3,229.5 556.8,244.5 559.9,267.5 562.2,244.5 563.6,238.5 564.8,229.5 565.8,219.5 566.7,229.5 568.2,244.5 571.4,264.5 573.7,238.5 575.1,232.5 576.3,223.5 577.3,211.5 578.2,229.5 579.7,244.5 582.9,269.5 585.1,240.5 586.5,234.5 587.8,225.5 588.8,213.5 589.6,229.5 591.1,244.5 594.3,269.5 596.6,242.5 598.0,236.5 599.2,227.5 600.2,211.5 601.1,229.5 602.6,244.5 605.8,269.5 608.0,244.5 609.4,238.5 610.6,229.5 611.6,214.5 612.5,229.5 614.0,244.5 617.2,269.5 619.5,244.5 620.9,238.5 622.1,229.5 623.1,213.5 624.0,229.5 625.5,244.5 628.6,269.5 630.9,240.5 632.3,234.5 633.5,225.5 634.5,219.5 635.4,229.5 636.9,244.5 640.1,268.5 642.4,240.5 643.8,234.5 645.0,225.5 646.0,219.5 646.9,229.5 648.4,244.5 651.5,266.5 653.8,242.5 655.2,236.5 656.4,227.5 657.4,217.5 658.3,229.5 659.8,244.5 663.0,269.5 665.3,240.5 666.7,234.5 667.9,225.5 668.9,213.5 669.8,229.5 671.3,244.5 674.4,266.5 676.7,240.5 678.1,234.5 679.3,225.5 680.3,217.5 681.2,229.5 682.7,244.5 685.9,270.5 688.2,240.5 689.6,234.5 690.8,225.5 691.8,217.5 692.7,229.5 694.2,244.5 697.4,268.5 699.6,244.5 701.0,238.5 702.2,229.5 703.2,217.5 704.1,229.5 705.6,244.5 708.8,264.5 711.1,244.5 712.5,238.5 713.7,229.5 714.7,216.5 715.6,229.5 717.1,244.5 720.2,264.5 722.5,238.5 723.9,232.5 725.1,223.5 726.1,211.5 727.0,229.5 728.5,244.5 731.7,269.5 734.0,242.5 735.4,236.5 736.6,227.5 737.6,211.5 738.5,229.5 740.0,244.5 743.1,270.5 745.4,244.5 746.8,238.5 748.0,229.5 749.0,213.5 749.9,229.5 751.4,244.5 754.6,268.5 756.9,244.5 758.3,238.5 759.5,229.5 760.5,214.5 761.4,229.5 762.9,244.5" fill="none" stroke="#fafa00" stroke-width="1" clip-path="url(#cw)"/>
 <rect x="76" y="271" width="1" height="4" fill="#fafa00"/><rect x="87" y="271" width="1" height="4" fill="#fafa00"/><rect x="110" y="271" width="1" height="4" fill="#fafa00"/><rect x="122" y="271" width="1" height="4" fill="#fafa00"/><rect x="133" y="271" width="1" height="4" fill="#fafa00"/><rect x="156" y="271" width="1" height="4" fill="#fafa00"/><rect x="168" y="271" width="1" height="4" fill="#fafa00"/><rect x="190" y="271" width="1" height="4" fill="#fafa00"/><rect x="202" y="271" width="1" height="4" fill="#fafa00"/><rect x="213" y="271" width="1" height="4" fill="#fafa00"/><rect x="225" y="271" width="1" height="4" fill="#fafa00"/><rect x="236" y="271" width="1" height="4" fill="#fafa00"/><rect x="248" y="271" width="1" height="4" fill="#fafa00"/><rect x="259" y="271" width="1" height="4" fill="#fafa00"/><rect x="271" y="271" width="1" height="4" fill="#fafa00"/><rect x="282" y="271" width="1" height="4" fill="#fafa00"/><rect x="294" y="271" width="1" height="4" fill="#fafa00"/><rect x="351" y="271" width="1" height="4" fill="#fafa00"/><rect x="362" y="271" width="1" height="4" fill="#fafa00"/><rect x="374" y="271" width="1" height="4" fill="#fafa00"/><rect x="385" y="271" width="1" height="4" fill="#fafa00"/><rect x="431" y="271" width="1" height="4" fill="#fafa00"/><rect x="454" y="271" width="1" height="4" fill="#fafa00"/><rect x="477" y="271" width="1" height="4" fill="#fafa00"/><rect x="500" y="271" width="1" height="4" fill="#fafa00"/><rect x="511" y="271" width="1" height="4" fill="#fafa00"/><rect x="591" y="271" width="1" height="4" fill="#fafa00"/><rect x="637" y="271" width="1" height="4" fill="#fafa00"/><rect x="671" y="271" width="1" height="4" fill="#fafa00"/><rect x="694" y="271" width="1" height="4" fill="#fafa00"/><rect x="706" y="271" width="1" height="4" fill="#fafa00"/><rect x="717" y="271" width="1" height="4" fill="#fafa00"/><rect x="729" y="271" width="1" height="4" fill="#fafa00"/>
 <rect x="756" y="190" width="46" height="11" rx="5.500" fill="#00bc00" shape-rendering="auto"/>
 <rect x="756" y="243" width="46" height="11" rx="5.500" fill="#f6f600" shape-rendering="auto"/>
 <!-- expand icon -->
 <g shape-rendering="auto">
 <path d="M718.100 130.600 L724.400 123.100 L745 123.100 L745 141.900 L737.500 148.100 L737.500 136.200 L727 146.200 L721.500 140.600 L731.500 130.600 Z" fill="#404040"/>
 <path d="M702.600 145.600 L709.400 139.400 L709.400 154.400 L719.400 142 L725 147.300 L713.800 156.300 L728.700 156.300 L722.200 163.100 L702.600 163.100 Z" fill="none" stroke="#484848" stroke-width="1.700"/>
 </g>
</svg>
<div class="abs" style="left:757px;top:188.500px;width:41px;text-align:center;font-size:12px;line-height:14px;color:#001400">2</div>
<div class="abs" style="left:757px;top:241.500px;width:41px;text-align:center;font-size:12px;line-height:14px;color:#181800">1</div>
<div class="yl y" style="top:126.8px">0.5</div><div class="yl y" style="top:149.9px">0.4</div><div class="yl y" style="top:173.0px">0.3</div><div class="yl y" style="top:196.1px">0.2</div><div class="yl y" style="top:219.2px">0.1</div><div class="yl y" style="top:242.3px">0.0</div><div class="yl y" style="top:265.4px">-0.1</div><div class="yl y" style="top:288.5px">-0.2</div><div class="yl y" style="top:311.6px">-0.3</div>
<div class="yl g" style="top:119.9px">1.5</div><div class="yl g" style="top:143.0px">1.0</div><div class="yl g" style="top:166.1px">0.5</div><div class="yl g" style="top:189.2px">0.0</div><div class="yl g" style="top:212.3px">-0.5</div><div class="yl g" style="top:235.4px">-1.0</div><div class="yl g" style="top:258.5px">-1.5</div><div class="yl g" style="top:281.6px">-2.0</div><div class="yl g" style="top:304.7px">-2.5</div><div class="yl g" style="top:327.8px">-3.0</div>
<div class="xl" style="left:64.9px">0.0</div><div class="xl" style="left:110.0px">0.1</div><div class="xl" style="left:178.9px">0.2</div><div class="xl" style="left:247.8px">0.3</div><div class="xl" style="left:316.7px">0.4</div><div class="xl" style="left:385.6px">0.5</div><div class="xl" style="left:454.5px">0.6</div><div class="xl" style="left:523.4px">0.7</div><div class="xl" style="left:592.3px">0.8</div><div class="xl" style="left:661.2px">0.9</div><div class="xl" style="left:730.1px">1.0</div>
<div class="abs" style="left:774px;top:344px;font-size:12px;line-height:14px;color:#a0a0a0">s</div>

<!-- header row -->
<div class="abs" style="left:9.500px;top:362px;font-size:16px;line-height:20px;color:#a0a0a0">Profile</div>
<div class="hd" style="left:108px">Probe</div>
<div class="hd" style="left:171px">Peak/Filter</div>
<div class="hd" style="left:259px">Invert</div>
<div class="hd" style="left:309px;width:57px;overflow:hidden">Coupling AC</div>
<div class="hd" style="left:662px">Live</div>
<div class="hd" style="left:727px">Max</div>
<div class="abs" style="left:0;top:378px;width:363px;height:2px;background:#c8c8c8"></div>
<div class="abs" style="left:363px;top:378px;width:143px;height:2px;background:#282828"></div><div class="abs" style="left:514px;top:378px;width:148px;height:2px;background:#282828"></div>
<div class="abs" style="left:662px;top:378px;width:138px;height:2px;background:#c8c8c8"></div>

<!-- Ch rows -->
<svg class="abs" style="left:0;top:380px" width="260" height="72" viewBox="0 0 260 72">
 <defs><radialGradient id="ge" cx="0.5" cy="0.5" r="0.6"><stop offset="0" stop-color="#fff"/><stop offset="0.6" stop-color="#e8e8e8"/><stop offset="1" stop-color="#999"/></radialGradient>
 <linearGradient id="gp" x1="0" y1="0" x2="0" y2="1"><stop offset="0" stop-color="#00c000"/><stop offset="0.16" stop-color="#40f040"/><stop offset="0.22" stop-color="#d8ffd8"/><stop offset="0.42" stop-color="#c0ffc0"/><stop offset="0.5" stop-color="#10e010"/><stop offset="0.56" stop-color="#007c00"/><stop offset="0.66" stop-color="#00c400"/><stop offset="1" stop-color="#00a800"/></linearGradient></defs>
 <g id="eyeA">
  <ellipse cx="28.700" cy="16" rx="12.300" ry="6.100" fill="#4a4a4a"/>
  <ellipse cx="28.700" cy="16.200" rx="11.200" ry="5" fill="url(#ge)"/>
  <circle cx="28.700" cy="16" r="4.800" fill="#141414"/>
  <path d="M25.300 13.500 Q27 12 28.300 13 L28.800 16.500 L26.500 19 Q24.500 17 25.300 13.500 Z" fill="#c8c8c8"/>
  <circle cx="26.300" cy="14.600" r="1.200" fill="#fff"/>
 </g>
 <path d="M17.500 9.900 L17.500 5.800 L39.500 5.800 L39.500 9.900" fill="none" stroke="#fafa00" stroke-width="3" stroke-linejoin="round"/>
 <path d="M17.500 21.800 L17.500 26.200 L39.500 26.200 L39.500 21.800" fill="none" stroke="#fafa00" stroke-width="3" stroke-linejoin="round"/>
 <g transform="translate(0 36)">
  <ellipse cx="28.700" cy="16" rx="12.300" ry="6.100" fill="#4a4a4a"/>
  <ellipse cx="28.700" cy="16.200" rx="11.200" ry="5" fill="url(#ge)"/>
  <circle cx="28.700" cy="16" r="4.800" fill="#141414"/>
  <path d="M25.300 13.500 Q27 12 28.300 13 L28.800 16.500 L26.500 19 Q24.500 17 25.300 13.500 Z" fill="#c8c8c8"/>
  <circle cx="26.300" cy="14.600" r="1.200" fill="#fff"/>
  <path d="M17.500 9.900 L17.500 5.800 L39.500 5.800 L39.500 9.900" fill="none" stroke="#00ec00" stroke-width="3" stroke-linejoin="round"/>
  <path d="M17.500 21.800 L17.500 26.200 L39.500 26.200 L39.500 21.800" fill="none" stroke="#00ec00" stroke-width="3" stroke-linejoin="round"/>
 </g>
 <!-- peak icons -->
 <path d="M170 25 L174.200 15 L175.200 15 L177.500 18.500 L181.200 6 L182.200 6 L187.300 25 Z" fill="#fafa00"/>
 <path d="M170 61 L174.200 51 L175.200 51 L177.500 54.500 L181.200 42 L182.200 42 L187.300 61 Z" fill="#00ec00"/>
 <!-- filter icons -->
 <line x1="209" y1="8.700" x2="228" y2="8.700" stroke="#fafa00" stroke-width="2" stroke-dasharray="3 1"/>
 <path d="M209.800 25 L213.800 11.500 L217 11.500 L218.500 16 L220.300 11.500 L224 11.500 L227.400 25 Z" fill="#fafa00"/>
 <line x1="209" y1="44.700" x2="228" y2="44.700" stroke="#00ec00" stroke-width="2" stroke-dasharray="3 1"/>
 <path d="M209.800 61 L213.800 47.500 L217 47.500 L218.500 52 L220.300 47.500 L224 47.500 L227.400 61 Z" fill="#00ec00"/>
 <!-- probe -->
 <rect x="99" y="47.900" width="8.800" height="2" fill="#fff"/>
 <rect x="99.500" y="49.900" width="8.300" height="1.800" fill="#3c9ce0"/>
 <path d="M107.300 50 L110.800 44 L112 40.500 L113.900 40.500 L113.900 59.800 L112 59.800 L110.800 56 Z" fill="#00d400"/>
 <path d="M108.500 50 Q110.800 48 111.800 43 L111.800 50 Z" fill="#90ff90"/>
 <rect x="113.800" y="44.700" width="21.200" height="10.300" rx="1.800" fill="url(#gp)"/>
 <path d="M136.300 46 Q138.600 50 136.300 54 M139.300 46.300 Q141.600 50 139.300 53.700" stroke="#00d800" stroke-width="1.600" fill="none"/>
 <path d="M141.500 49.300 L143.500 49.300 Q145.200 49.300 145.200 51 L145.200 55.500 Q145.200 57.200 143.500 57.200 L140 57.200 Q137.800 57.200 137.800 59.200 L137.800 60.500 Q137.800 62.300 139.800 62.300 L147.800 62.300" fill="none" stroke="#00cc00" stroke-width="2.600"/>
 <path d="M141.500 49.300 L143.500 49.300 Q145.200 49.300 145.200 51 L145.200 55.500 Q145.200 57.200 143.500 57.200 L140 57.200 Q137.800 57.200 137.800 59.200 L137.800 60.500" fill="none" stroke="#c0ffc0" stroke-width="0.800"/>
</svg>
<div class="abs yc bd" style="left:53.500px;top:387px;font-size:16px;font-weight:bold;line-height:20px;letter-spacing:-0.700px">Ch1</div>
<div class="abs gc bd" style="left:53.500px;top:423px;font-size:16px;font-weight:bold;line-height:20px;letter-spacing:-0.700px">Ch2</div>
<div class="abs yc bd" style="left:103.500px;top:383px;width:40px;text-align:center;font-size:14px;font-weight:bold;line-height:13px;letter-spacing:0.700px">20<br>AMP</div>

<div class="dash" style="left:262px;top:395px"></div><div class="dash" style="left:327px;top:395px"></div><div class="dash" style="left:457px;top:395px"></div>
<div class="dash" style="left:262px;top:431px"></div><div class="dash" style="left:327px;top:431px"></div><div class="dash" style="left:457px;top:431px"></div>

<div class="abs" style="left:376px;top:382px;width:55px;height:29px;border:2px solid #f2d21a;border-top-color:#5c5210;background:radial-gradient(ellipse 22px 9px at 50% 40%,rgba(200,200,210,0.45),rgba(200,200,210,0) 100%),linear-gradient(to bottom,#686870 0,#484850 11px,#0c0c14 12px,#1a2e4e 25px)"></div>
<div class="val yc" style="left:364px;top:387.500px;width:80px;text-align:center;word-spacing:1px;padding-left:1.300px">1 A</div>
<div class="val gc" style="left:363px;top:423px;width:80px;text-align:center;word-spacing:2px;padding-left:1.300px">5 V</div>
<div class="val" style="left:363px;top:456px;width:80px;text-align:center;color:#fff;word-spacing:1px;padding-left:1.300px">1 s</div>
<div class="abs" style="left:11px;top:455px;font-size:16.500px;line-height:20px;color:#fff">Sweep</div>

<svg class="abs" style="left:528px;top:380px" width="32" height="72" viewBox="0 0 32 72">
 <g fill="none" stroke="#fafa00" stroke-width="3.300">
  <path d="M8.700 12 L8.700 20 Q8.700 24 12.700 24 L20 24"/>
  <path d="M23.500 19 L23.500 12.500 Q23.500 8.500 19.500 8.500 L13.300 8.500"/>
 </g>
 <path d="M2.800 12.900 L8.300 5.500 L13.800 12.900 Z" fill="#fafa00"/>
 <path d="M18.100 18.800 L23.600 26.300 L29.100 18.800 Z" fill="#fafa00"/>
 <g transform="translate(0 30)">
  <g fill="none" stroke="#00ec00" stroke-width="3.300">
   <path d="M8.700 12 L8.700 20 Q8.700 24 12.700 24 L20 24"/>
   <path d="M23.500 19 L23.500 12.500 Q23.500 8.500 19.500 8.500 L13.300 8.500"/>
  </g>
  <path d="M2.800 12.900 L8.300 5.500 L13.800 12.900 Z" fill="#00ec00"/>
  <path d="M18.100 18.800 L23.600 26.300 L29.100 18.800 Z" fill="#00ec00"/>
 </g>
</svg>

<div class="val yc col" style="left:577.500px;top:387px">-0.13</div>
<div class="val yc col" style="left:642.700px;top:387px">0.02</div>
<div class="val yc col" style="left:708px;top:387px">0.17</div>
<div class="val gc col" style="left:577.500px;top:423px">-0.015</div>
<div class="val gc col" style="left:642.700px;top:423px">0.005</div>
<div class="val gc col" style="left:708px;top:423px">0.026</div>

<!-- dropdown -->
<div class="hd" style="left:602px;color:#303030">Min</div>
<div class="abs" style="left:363px;top:136px;width:299px;height:242px;background:rgba(0,0,0,0.5)"></div>
<div class="abs" style="left:363px;top:338px;width:299px;height:40px;background:rgba(0,0,0,0.55)"></div>
<div class="item" style="top:146px">500 mA</div>
<div class="item sel" style="top:192px">1 A</div>
<div class="item" style="top:238px">2 A</div>
<div class="item" style="top:284px">5 A</div>
<div class="item" style="top:330px">10 A</div>
<div class="abs" style="left:612px;top:146px;width:40px;height:229px;background:#fff"></div>
<svg class="abs" style="left:612px;top:146px" width="40" height="230" viewBox="0 0 40 230">
 <defs><linearGradient id="gu" x1="0" y1="0" x2="0" y2="1"><stop offset="0" stop-color="#56565a"/><stop offset="0.47" stop-color="#8c8c90"/><stop offset="0.48" stop-color="#161618"/><stop offset="0.66" stop-color="#0c1220"/><stop offset="0.92" stop-color="#12305c"/><stop offset="0.93" stop-color="#1c3c6c"/><stop offset="1" stop-color="#1c3c6c"/></linearGradient>
 <linearGradient id="gv" x1="0" y1="0" x2="1" y2="0"><stop offset="0" stop-color="#fafafe"/><stop offset="0.5" stop-color="#ececf4"/><stop offset="0.5" stop-color="#d4d4e2"/><stop offset="1" stop-color="#c0c0d4"/></linearGradient>
 <linearGradient id="gt" x1="0" y1="0" x2="1" y2="0"><stop offset="0" stop-color="#f4f4fa"/><stop offset="0.15" stop-color="#a0a0a8"/><stop offset="0.5" stop-color="#1c1c20"/><stop offset="0.75" stop-color="#182c50"/><stop offset="1" stop-color="#1e3a66"/></linearGradient>
 <linearGradient id="gq" x1="0" y1="0" x2="1" y2="1"><stop offset="0" stop-color="#fff"/><stop offset="1" stop-color="#c4c8dc"/></linearGradient></defs>
 <rect x="0" y="0" width="40" height="39.500" fill="#d4d4de"/>
 <rect x="1.500" y="1.500" width="36" height="36.500" fill="url(#gu)"/>
 <rect x="37.500" y="1" width="1" height="38" fill="#fff"/><rect x="38.500" y="1" width="1" height="38" fill="#a8a8c8"/>
 <path d="M18 9.500 L34.500 24.500 L29.800 29 L18 18 L6.500 29 L1.800 24.500 Z" fill="#000" opacity="0.350" transform="translate(0.800 1.200)"/>
 <path d="M18 9 L34.500 24.500 L29.800 29 L18 17.500 L6.500 29 L1.800 24.500 Z" fill="url(#gv)"/>
 <g transform="translate(0 189.300)">
 <rect x="0" y="0" width="40" height="39.500" fill="#d4d4de"/>
 <rect x="1.500" y="1.500" width="36" height="36.500" fill="url(#gu)"/>
 <rect x="37.500" y="1" width="1" height="38" fill="#fff"/><rect x="38.500" y="1" width="1" height="38" fill="#a8a8c8"/>
 <path d="M18 30.600 L34.300 14.400 L29.900 10 L18 20.600 L6 10 L1.800 14.400 Z" fill="#000" opacity="0.350" transform="translate(0.800 1.200)"/>
 <path d="M18 30.600 L34.300 14.400 L29.900 10 L18 20.600 L6 10 L1.800 14.400 Z" fill="url(#gv)"/>
 </g>
 <rect x="1" y="62" width="35" height="29" fill="url(#gt)"/>
 <rect x="37" y="62" width="1" height="29" fill="#2c4470"/>
 <g fill="url(#gq)" stroke="#3c4058" stroke-width="0.700">
 <rect x="1.800" y="63.200" width="32.500" height="4.800" rx="2.400"/><rect x="1.800" y="70.200" width="32.500" height="4.800" rx="2.400"/><rect x="1.800" y="77.200" width="32.500" height="4.800" rx="2.400"/><rect x="1.800" y="84.200" width="32.500" height="4.800" rx="2.400"/>
 </g>
</svg>
</div>
</body>
</html>
